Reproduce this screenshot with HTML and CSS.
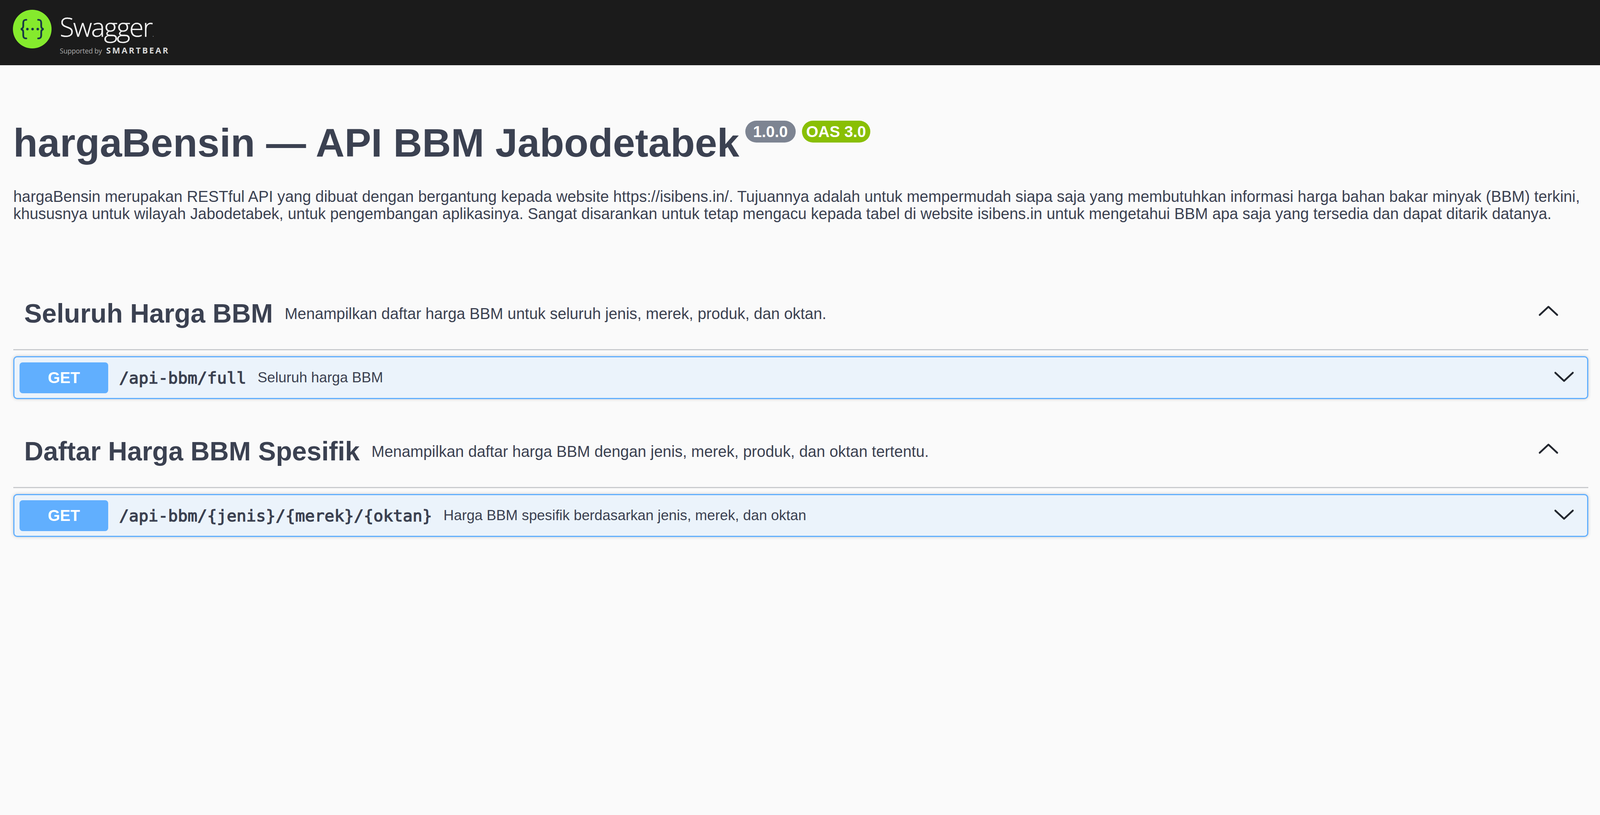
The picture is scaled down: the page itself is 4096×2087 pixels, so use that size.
FILE: index.html
```html
<!DOCTYPE html>
<html lang="id">
<head>
<meta charset="utf-8">
<title>hargaBensin — API BBM Jabodetabek</title>
<link rel="stylesheet" href="styles.css">
</head>
<body>
<header class="topbar">
  <svg class="logo" viewBox="0 0 112 112" aria-hidden="true">
    <circle cx="56" cy="56" r="56" fill="#85ea2d"/>
    <path class="braces" d="M39 29c-7 0-9 3-9 9v9c0 5-2 8-7 9 5 1 7 4 7 9v9c0 6 2 9 9 9M73 29c7 0 9 3 9 9v9c0 5 2 8 7 9-5 1-7 4-7 9v9c0 6-2 9-9 9"/>
    <circle class="dot" cx="42" cy="56" r="3.6"/>
    <circle class="dot" cx="57" cy="56" r="3.6"/>
    <circle class="dot" cx="72" cy="56" r="3.6"/>
  </svg>
  <div class="brand">
    <div class="brand-name">Swagger<span class="tm">.</span></div>
    <div class="brand-sub"><span class="supported">Supported by</span><span class="bear">SMARTBEAR</span></div>
  </div>
</header>
<main class="wrapper">
  <section class="info">
    <div class="title-row">
      <h1 class="title">hargaBensin — API BBM Jabodetabek</h1>
      <span class="badge badge-version">1.0.0</span>
      <span class="badge badge-oas">OAS 3.0</span>
    </div>
    <p class="description">hargaBensin merupakan RESTful API yang dibuat dengan bergantung kepada website https://isibens.in/. Tujuannya adalah untuk mempermudah siapa saja yang membutuhkan informasi harga bahan bakar minyak (BBM) terkini, khususnya untuk wilayah Jabodetabek, untuk pengembangan aplikasinya. Sangat disarankan untuk tetap mengacu kepada tabel di website isibens.in untuk mengetahui BBM apa saja yang tersedia dan dapat ditarik datanya.</p>
  </section>

  <section class="tag-section">
    <div class="tag-row">
      <h2 class="tag-name">Seluruh Harga BBM</h2>
      <span class="tag-desc">Menampilkan daftar harga BBM untuk seluruh jenis, merek, produk, dan oktan.</span>
      <svg class="chevron chevron-up" viewBox="0 0 56 30" aria-hidden="true"><polyline points="5.5,25.5 28,4.5 50.5,25.5"/></svg>
    </div>
    <div class="opblock">
      <span class="method">GET</span>
      <span class="path">/api-bbm/full</span>
      <span class="summary">Seluruh harga BBM</span>
      <svg class="chevron chevron-down" viewBox="0 0 56 30" aria-hidden="true"><polyline points="5.5,4.5 28,25.5 50.5,4.5"/></svg>
    </div>
  </section>

  <section class="tag-section">
    <div class="tag-row">
      <h2 class="tag-name">Daftar Harga BBM Spesifik</h2>
      <span class="tag-desc">Menampilkan daftar harga BBM dengan jenis, merek, produk, dan oktan tertentu.</span>
      <svg class="chevron chevron-up" viewBox="0 0 56 30" aria-hidden="true"><polyline points="5.5,25.5 28,4.5 50.5,25.5"/></svg>
    </div>
    <div class="opblock">
      <span class="method">GET</span>
      <span class="path">/api-bbm/{jenis}/{merek}/{oktan}</span>
      <span class="summary">Harga BBM spesifik berdasarkan jenis, merek, dan oktan</span>
      <svg class="chevron chevron-down" viewBox="0 0 56 30" aria-hidden="true"><polyline points="5.5,4.5 28,25.5 50.5,4.5"/></svg>
    </div>
  </section>
</main>
</body>
</html>
```

FILE: styles.css
```css
* { box-sizing: border-box; }
html, body { margin: 0; padding: 0; }
body {
  background: #fafafa;
  color: #3b4151;
  font-family: "Liberation Sans", Arial, sans-serif;
  min-height: 2087px;
  overflow: hidden;
}
.topbar {
  display: flex;
  gap: 21px;
  height: 167px;
  padding: 25px 0 0 33px;
  background: #1b1b1b;
}
.logo { width: 99px; height: 99px; flex: none; }
.braces { fill: none; stroke: #173646; stroke-width: 5; stroke-linecap: round; }
.dot { fill: #173646; }
.brand { color: #f2f2f2; font-family: "Open Sans", sans-serif; }
.brand-name {
  font-size: 67px;
  font-weight: 300;
  line-height: 77px;
  margin-top: 5px;
  letter-spacing: -2.4px;
  -webkit-text-stroke: .5px #f2f2f2;
}
.tm { font-size: 24px; color: #888; -webkit-text-stroke: 0; }
.brand-sub { display: flex; align-items: baseline; gap: 11px; line-height: 28px; margin-top: -8px; }
.supported { font-size: 17.5px; color: #aaa; letter-spacing: -.2px; }
.bear { font-size: 21.5px; font-weight: 700; letter-spacing: 3.7px; color: #d8d8d8; }

.wrapper { padding: 0 30px 0 34px; }
.info { padding-top: 144px; }
.title-row { display: flex; align-items: flex-start; }
.title {
  margin: 0 15px 0 0;
  font-size: 102.2px;
  font-weight: 700;
  line-height: 110px;
  white-space: nowrap;
}
.badge {
  display: inline-flex;
  align-items: center;
  height: 56px;
  margin-top: -2px;
  padding: 0 20px;
  border-radius: 28px;
  color: #fff;
  font-size: 40px;
  font-weight: 700;
}
.badge-version { background: #7d8492; margin-right: 16px; }
.badge-oas { background: #89bf04; padding: 0 11px; }
.description {
  margin: 60px 0 0;
  font-size: 39.75px;
  line-height: 44px;
}

.tag-section { margin-top: 94px; }
.info + .tag-section { margin-top: 194px; }
.tag-row {
  display: flex;
  align-items: center;
  gap: 28px;
  padding: 0 0 51px 28px;
  border-bottom: 3px solid #c9cbce;
}
.tag-name { margin: 0; font-size: 67.8px; font-weight: 700; line-height: 80px; }
.tag-desc { font-size: 39.8px; margin-left: 2px; }
.chevron polyline { fill: none; stroke: #23272f; stroke-width: 4.5; stroke-linecap: round; stroke-linejoin: round; }
.chevron-up {
  width: 56px;
  height: 30px;
  margin-left: auto;
  margin-right: 74px;
  margin-bottom: 14px;
}
.opblock {
  display: flex;
  align-items: center;
  height: 110px;
  margin-top: 15px;
  padding: 0 31px 0 13px;
  border: 3px solid #61affe;
  border-radius: 10px;
  background: #ebf3fb;
  box-shadow: 0 0 8px rgba(0, 0, 0, .19);
}
.method {
  display: flex;
  align-items: center;
  justify-content: center;
  width: 227px;
  height: 79px;
  border-radius: 8px;
  background: #61affe;
  color: #fff;
  font-size: 40px;
  font-weight: 700;
}
.path {
  margin-left: 28px;
  font-family: "DejaVu Sans Mono", monospace;
  font-size: 41.6px;
  font-weight: 400;
  -webkit-text-stroke: 1.5px #3b4151;
}
.summary { margin-left: 29px; font-size: 36.8px; }
.chevron-down { width: 56px; height: 30px; margin-left: auto; margin-bottom: 4px; }
```
